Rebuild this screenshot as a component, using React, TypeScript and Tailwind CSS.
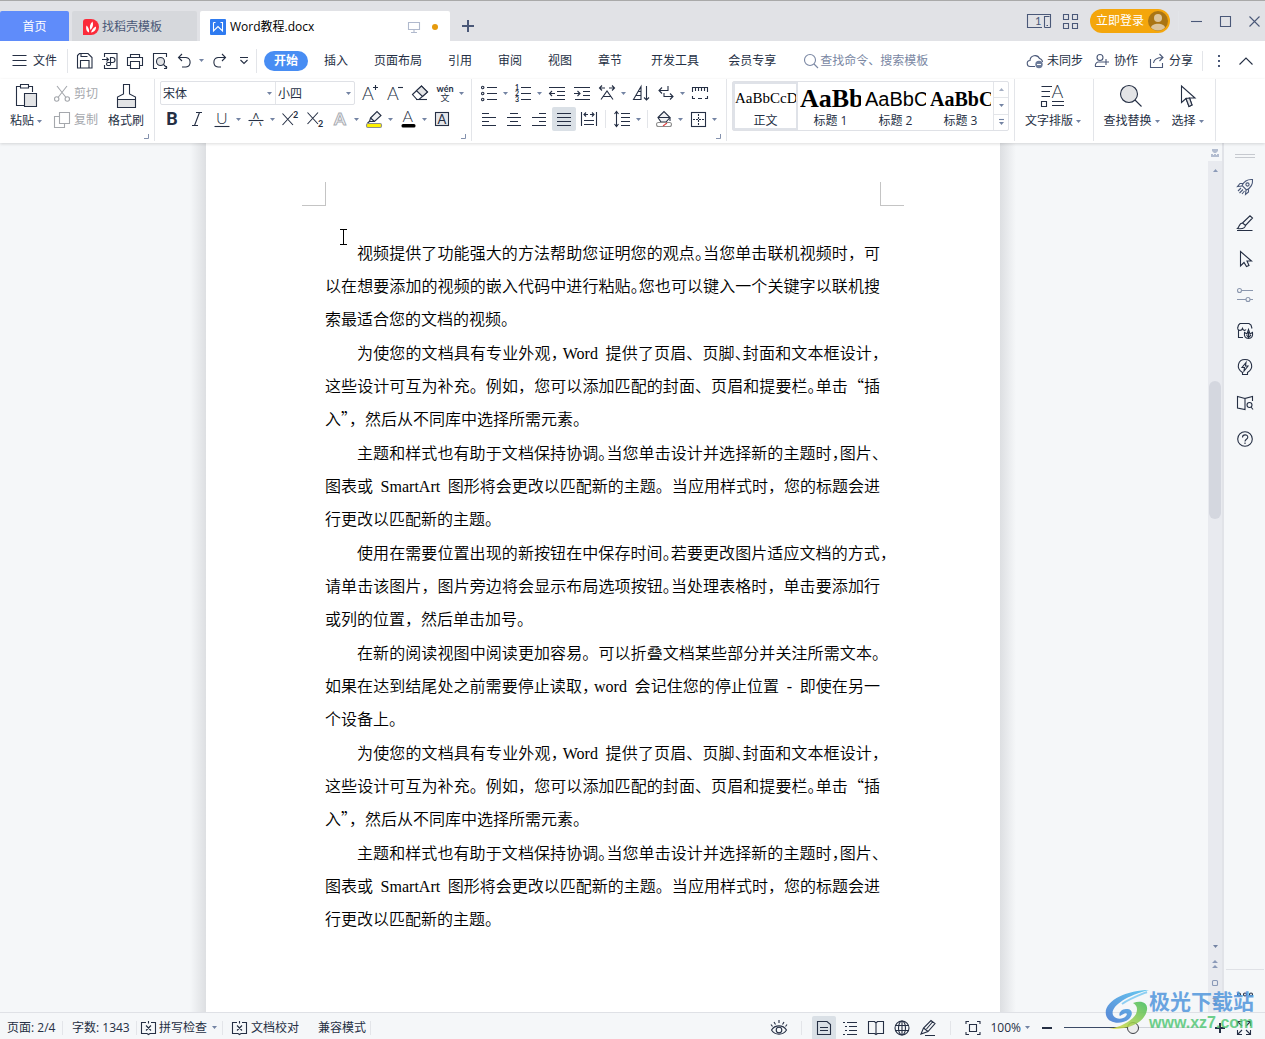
import React from "react";

type Kids = { children?: React.ReactNode };

function Svg({ children, w = 16, h = 16, className = "" }: Kids & { w?: number; h?: number; className?: string }) {
  return (
    <svg width={w} height={h} viewBox={`0 0 ${w} ${h}`} fill="none" stroke="currentColor" strokeWidth="1.1" aria-hidden="true" className={"shrink-0 overflow-visible " + className}>
      {children}
    </svg>
  );
}

function P({ d, fill }: { d: string; fill?: string }) {
  return <path d={d} fill={fill} />;
}

function Letter({ x, y, size, children, weight = 300, color = "currentColor" }: Kids & { x: number; y: number; size: number; weight?: number; color?: string }) {
  return (
    <text x={x} y={y} fontSize={size} fontWeight={weight} fill={color} stroke="none" fontFamily="Lato, 'Noto Sans CJK SC', sans-serif">
      {children}
    </text>
  );
}

function Caret() {
  return (
    <svg width="5" height="3" viewBox="0 0 5 3" className="shrink-0 text-[#7383a3]" aria-hidden="true">
      <path d="M0 0H5L2.5 3Z" fill="currentColor" />
    </svg>
  );
}

function Tool({ label, children, caret, active }: Kids & { label: string; caret?: boolean; active?: boolean }) {
  return (
    <button type="button" aria-label={label} className="flex h-6 shrink-0 items-center">
      <span className={active ? "flex size-6 items-center justify-center rounded-xs bg-[#dae0e6]" : "flex size-6 items-center justify-center"}>{children}</span>
      {caret && (
        <span className="flex w-[9px] justify-center">
          <Caret />
        </span>
      )}
    </button>
  );
}

function Divider({ className = "h-full" }: { className?: string }) {
  return <div className={"w-px shrink-0 bg-[#e3e5e9] " + className} />;
}

function Corner() {
  return (
    <svg width="5" height="5" viewBox="0 0 5 5" className="absolute right-[5px] bottom-0.5 text-[#8391ad]" aria-hidden="true">
      <path d="M4.5 0V4.5H0" fill="none" stroke="currentColor" />
    </svg>
  );
}

function TitleBar() {
  return (
    <header className="flex h-[41px] shrink-0 items-end border-t border-[#a9a9a9] bg-[#e1e2e6]">
      <nav className="flex gap-[3px]">
        <button type="button" className="h-[30px] w-[69px] rounded-t-xs bg-[#5f8cfa] pt-0.5 text-white">首页</button>
        <button type="button" className="flex h-[30px] w-[125px] items-center gap-[3px] rounded-t-xs bg-[#d6d8dc] pt-0.5 pl-[11px] text-[#4a5878]">
          <Svg className="text-white">
            <path d="M3 0H8A8 8 0 0 1 8 16H0V3A3 3 0 0 1 3 0Z" fill="#fb2b3a" stroke="none" />
            <path d="M7.500 11C6.200 8.500 6.800 5 9.500 2.500C10.600 5.500 10 8.500 7.500 11Z" fill="currentColor" stroke="none" />
            <path d="M6 13.500C3.500 12.500 2.500 9.500 3.500 6.500C5.300 8 6.500 10.500 6 13.500ZM8 13.500C8.500 11 10.500 8.500 13 7.500C13.300 10.500 11.500 13.200 8 13.500Z" fill="currentColor" stroke="none" />
          </Svg>
          找稻壳模板
        </button>
        <button type="button" className="flex h-[30px] w-[250px] items-center rounded-t-xs bg-white pt-0.5 pr-3 pl-2.5 text-black">
          <Svg className="text-white">
            <rect width="16" height="16" rx="1" fill="#2f7bf0" stroke="none" />
            <P d="M3.500 3.500V12L8 7.500L12.500 12V3.500H10.500M3.500 3.500H5.500" />
          </Svg>
          <span className="ml-1 flex-1 text-left">Word教程.docx</span>
          <Svg w={12} h={12} className="text-[#b0b9cd]">
            <P d="M0.500 1.500H11.500V8.500H0.500ZM6 8.500V11.500M3 11.500H9" />
          </Svg>
          <span className="ml-3 size-1.5 rounded-full bg-[#e69a0c]" />
        </button>
      </nav>
      <button type="button" aria-label="新建标签" className="ml-3 flex h-[30px] w-3 items-center justify-center text-[#4a5878]">
        <Svg w={12} h={12}>
          <path d="M6 0V12M0 6H12" strokeWidth="2" />
        </Svg>
      </button>
      <div className="ml-auto flex h-full items-center gap-3 pr-[5px] text-[#4a5878]">
        <button type="button" aria-label="单页模式">
          <Svg w={24} h={14}>
            <P d="M15 13.500H0.500V0.500H23.500V13.500M17.500 13.500V2.500H22.500M17.500 13.500H23.500M19.500 11.500H21" />
            <Letter x={8} y={11} size={11} weight={400}>1</Letter>
          </Svg>
        </button>
        <button type="button" aria-label="应用">
          <Svg w={15} h={15}>
            <P d="M0.500 0.500H5.500V5.500H0.500ZM9.500 0.500H14.500V5.500H9.500ZM0.500 9.500H5.500V14.500H0.500ZM9.500 9.500H14.500V14.500H9.500Z" />
          </Svg>
        </button>
        <button type="button" className="flex h-6 w-20 items-center justify-between rounded-full bg-[#f4a60c] pr-0.5 pl-1.5 text-white">
          立即登录
          <Svg w={20} h={20}>
            <circle cx="10" cy="10" r="10" fill="#aa7514" stroke="none" />
            <circle cx="10" cy="7" r="4" fill="#dcc49b" stroke="none" />
            <path d="M3 16.500C4 11.500 16 11.500 17 16.500C14 20.500 6 20.500 3 16.500Z" fill="#dcc49b" stroke="none" />
          </Svg>
        </button>
        <Divider className="-ml-1 h-5 bg-[#c5c8cf]" />
        <div className="flex items-center gap-[18px]">
          <button type="button" aria-label="最小化"><Svg w={11} h={11}><P d="M0 5.500H11" /></Svg></button>
          <button type="button" aria-label="最大化"><Svg w={11} h={11}><P d="M0.500 0.500H10.500V10.500H0.500Z" /></Svg></button>
          <button type="button" aria-label="关闭"><Svg w={11} h={11}><P d="M0.500 0.500L10.500 10.500M10.500 0.500L0.500 10.500" /></Svg></button>
        </div>
      </div>
    </header>
  );
}

function MenuBar() {
  return (
    <div className="flex h-[38px] shrink-0 items-center bg-white pt-px pr-3 whitespace-nowrap">
      <button type="button" className="flex items-center gap-1.5 pl-3">
        <Svg w={15} h={12}><P d="M0.500 0.500H14.500M0.500 5.500H14.500M0.500 10.500H14.500" /></Svg>
        文件
      </button>
      <Divider className="ml-2.5 h-6" />
      <div className="flex items-center gap-px pl-[5px]">
        <Tool label="保存"><Svg><P d="M0.500 2.500L2.500 0.500H11L15 4.500V15H0.500ZM4 0.500V3.500H10.500M3.500 15V7.500H12V15" /></Svg></Tool>
        <Tool label="输出为PDF">
          <Svg>
            <P d="M2.500 4V0.500H15V15.500H2.500V12M0 6.500H6.500M4.500 4.500L6.500 6.500L4.500 8.500" />
            <P d="M8.500 12V4.500H10.500A2.500 2.500 0 0 1 10.500 9.500H6A1.500 1.500 0 0 0 6 12.500H8.500" />
          </Svg>
        </Tool>
        <Tool label="打印"><Svg><P d="M3.500 4V1.500H12.500V4M3 12.500H0.500V4.500H15.500V12.500H13M3.500 8.500H12.500V15.500H3.500Z" /></Svg></Tool>
        <Tool label="打印预览">
          <Svg>
            <P d="M5 15.500H1.500V0.500H14.500V4M14.500 13V15.500H12" />
            <circle cx="8.500" cy="8.500" r="4" fill="#e3e4e6" />
            <P d="M11.500 11.500L15 15" />
          </Svg>
        </Tool>
        <Tool label="撤销" caret><Svg><P d="M5 1L1.500 4.500L5 8M1.500 4.500H9A4.800 4.800 0 0 1 9 14H5" /></Svg></Tool>
        <Tool label="恢复"><Svg><P d="M11 1L14.500 4.500L11 8M14.500 4.500H7A4.800 4.800 0 0 0 7 14H10" /></Svg></Tool>
        <Tool label="自定义快速访问"><Svg w={8} h={8}><P d="M0 0.500H8M0.500 3L4 6.500L7.500 3" /></Svg></Tool>
      </div>
      <Divider className="h-6" />
      <nav className="flex items-center gap-[26px] pl-[7px]">
        <button type="button" className="-mr-2.5 h-5 w-11 rounded-full bg-[#488df3] font-bold text-white">开始</button>
        <button type="button">插入</button>
        <button type="button">页面布局</button>
        <button type="button">引用</button>
        <button type="button">审阅</button>
        <button type="button">视图</button>
        <button type="button">章节</button>
        <button type="button" className="ml-[3px]">开发工具</button>
        <button type="button" className="ml-[3px]">会员专享</button>
      </nav>
      <label className="ml-7 flex items-center gap-0.5 text-[#7a87a3]">
        <Svg w={14} h={14}><circle cx="6" cy="6" r="5.500" /><P d="M10 10L14 14" /></Svg>
        <input aria-label="查找命令、搜索模板" placeholder="查找命令、搜索模板" className="w-32 outline-none placeholder:text-[#7a87a3]" />
      </label>
      <div className="ml-auto flex items-center gap-[11px]">
        <button type="button" className="flex items-center gap-1">
          <Svg className="text-[#4a5878]">
            <P d="M8 13.500H3.500A3 3 0 0 1 3 7.500A5 5 0 0 1 12.500 5.500A4 4 0 0 1 15.500 9" />
            <circle cx="12" cy="11.500" r="3.700" fill="#6b7a99" stroke="none" />
            <path d="M10 11.500H14" stroke="#fff" />
          </Svg>
          未同步
        </button>
        <button type="button" className="flex items-center gap-1">
          <Svg className="text-[#4a5878]">
            <circle cx="6" cy="4.500" r="3" />
            <P d="M9 9H4A3.500 3.500 0 0 0 1.500 13.500H11M12 6V12M9 9H15" />
          </Svg>
          协作
        </button>
        <button type="button" className="flex items-center gap-1">
          <Svg className="text-[#4a5878]"><P d="M1.500 6V14.500H13.500V10M4.500 10C5 6.500 8 4.500 14 4.500M10.500 1L14 4.500L10.500 8" /></Svg>
          分享
        </button>
        <Divider className="-ml-0.5 h-5" />
        <button type="button" aria-label="更多" className="ml-1 flex flex-col gap-[3px]">
          <span className="size-0.5 bg-[#4a5878]" />
          <span className="size-0.5 bg-[#4a5878]" />
          <span className="size-0.5 bg-[#4a5878]" />
        </button>
        <button type="button" aria-label="收起功能区" className="ml-2"><Svg w={14} h={8}><P d="M0.500 7.500L7 1L13.500 7.500" /></Svg></button>
      </div>
    </div>
  );
}

function Labelled({ icon, text, caret }: { icon: React.ReactNode; text: string; caret?: boolean }) {
  return (
    <button type="button" className="flex flex-col items-center gap-[3px] pt-1">
      <span className="flex h-[26px] items-center justify-center">{icon}</span>
      <span className="flex items-center gap-[3px] leading-[18px]">
        {text}
        {caret && <Caret />}
      </span>
    </button>
  );
}

function StyleCard({ sample, name, font, active }: { sample: string; name: string; font: string; active?: boolean }) {
  return (
    <button type="button" className={(active ? "border-[#dfe2e8] " : "border-transparent ") + "flex h-full w-[65px] flex-col items-center justify-between overflow-hidden border-2"}>
      <span className={"flex h-[30px] w-full items-center overflow-hidden whitespace-nowrap text-black " + font}>{sample}</span>
      <span className="leading-[14px]">{name}</span>
    </button>
  );
}

function Ribbon() {
  return (
    <div className="z-10 flex h-16 shrink-0 items-start bg-white whitespace-nowrap shadow-[0_1px_3px_rgba(0,0,0,0.14)]">
      <section className="relative flex h-[62px] w-[154px] items-start pl-2.5">
        <Labelled
          text="粘贴"
          caret
          icon={
            <Svg w={21} h={24}>
              <P d="M4 2.500H0.500V21.500H8M12 2.500H16.500V8M4.500 0.500H12.500V4H4.500Z" />
              <P d="M8.500 9.500H20.500V22.500H8.500Z" fill="#e3e4e6" />
            </Svg>
          }
        />
        <div className="ml-3 flex flex-col gap-0.5 pt-[3px] text-[#a5a8ad]">
          <button type="button" className="flex h-6 items-center gap-1">
            <Svg><P d="M3 0L12 11.500M13 0L4 11.500" /><circle cx="2.700" cy="13" r="2.200" /><circle cx="13.300" cy="13" r="2.200" /></Svg>
            剪切
          </button>
          <button type="button" className="flex h-6 items-center gap-1">
            <Svg><P d="M5.500 0.500H15.500V11.500H5.500ZM5.500 4.500H0.500V15.500H10.500V11.500" /></Svg>
            复制
          </button>
        </div>
        <div className="ml-2.5">
          <Labelled
            text="格式刷"
            icon={
              <Svg w={19} h={24}>
                <P d="M0.500 15.500H18.500V23.500H0.500Z" fill="#e3e4e6" />
                <P d="M0.500 15.500V13L6.500 10V0.500H12.500V10L18.500 13V15.500" />
              </Svg>
            }
          />
        </div>
        <Corner />
      </section>
      <Divider className="h-[62px]" />
      <section className="relative flex h-[62px] w-[316px] flex-col gap-0.5 pt-0.5 pl-[5px]">
        <div className="flex gap-[3px]">
          <div className="flex h-6 rounded-xs border border-[#dfe1e6]">
            <label className="relative flex items-center">
              <select aria-label="字体" className="h-full w-[114px] appearance-none pt-px pl-0.5 outline-none"><option>宋体</option></select>
              <span className="absolute right-[3px]"><Caret /></span>
            </label>
            <Divider />
            <label className="relative flex items-center">
              <select aria-label="字号" className="h-full w-[78px] appearance-none pt-px pl-0.5 outline-none"><option>小四</option></select>
              <span className="absolute right-[3px]"><Caret /></span>
            </label>
          </div>
          <div className="flex gap-px">
            <Tool label="增大字号"><Svg><Letter x={0} y={15} size={18}>A</Letter><P d="M11 2.500H16M13.500 0V5" /></Svg></Tool>
            <Tool label="减小字号"><Svg><Letter x={0} y={15} size={18}>A</Letter><P d="M11 2.500H16" /></Svg></Tool>
            <Tool label="清除格式">
              <Svg>
                <P d="M0.500 9.500L9.500 1L15.500 7L7 14.500H5Z" />
                <P d="M4.500 5.700L9.500 1L15.500 7L10.500 11.500Z" fill="#e3e4e6" />
                <P d="M4 14.500H15" />
              </Svg>
            </Tool>
            <Tool label="拼音指南" caret>
              <span className="flex flex-col items-center">
                <span className="font-[Lato] text-[9px] leading-[9px] font-bold">wén</span>
                <span className="text-[9px] leading-[9px]">文</span>
              </span>
            </Tool>
          </div>
        </div>
        <div className="flex gap-px">
          <Tool label="加粗"><span className="font-[Roboto] text-lg font-bold">B</span></Tool>
          <Tool label="倾斜"><Svg><P d="M7 1.500H13M3 14.500H9M10.500 1.500L5.500 14.500" /></Svg></Tool>
          <Tool label="下划线" caret><Svg><Letter x={2} y={13} size={16}>U</Letter><P d="M0.500 15.500H15.500" /></Svg></Tool>
          <Tool label="删除线" caret><Svg><Letter x={2} y={15} size={18}>A</Letter><path d="M0 9.500H16" stroke="#fff" strokeWidth="3" /><P d="M0.500 9.500H15.500" /></Svg></Tool>
          <Tool label="上标"><Svg><P d="M0.500 2.500L11 14M11 2.500L0.500 14" /><Letter x={11} y={7} size={9} weight={700}>2</Letter></Svg></Tool>
          <Tool label="下标"><Svg><P d="M0.500 1.500L11 13M11 1.500L0.500 13" /><Letter x={11} y={16} size={9} weight={700}>2</Letter></Svg></Tool>
          <Tool label="文字效果" caret>
            <svg width="16" height="18" viewBox="0 0 16 18" aria-hidden="true" className="overflow-visible">
              <text x="2" y="15" fontSize="17" fontWeight="700" fontFamily="Lato, sans-serif" fill="#fff" stroke="#a9acb3" strokeWidth="1">A</text>
            </svg>
          </Tool>
          <Tool label="突出显示" caret>
            <Svg>
              <P d="M4.500 7L11 0.500L15 4.500L8.500 10.500H3.500Z" fill="#f1f2f4" />
              <P d="M4.500 7L8.500 10.500M3.500 10.500L1.500 12" />
              <rect x="0.500" y="12.500" width="15" height="4" rx="1.500" fill="#fff200" stroke="#8e8e8e" />
            </Svg>
          </Tool>
          <Tool label="字体颜色" caret><Svg><Letter x={2.500} y={11} size={16}>A</Letter><rect x="1.500" y="13" width="14" height="3.500" rx="1.500" fill="#000" stroke="none" /></Svg></Tool>
          <Tool label="字符底纹"><Svg><rect x="1.500" y="1.500" width="13" height="13" fill="#e6e7ea" /><Letter x={3.500} y={13} size={13} weight={400}>A</Letter></Svg></Tool>
        </div>
        <Corner />
      </section>
      <Divider className="h-[62px]" />
      <section className="relative flex h-[62px] w-[254px] flex-col gap-0.5 pt-0.5 pl-[5px]">
        <div className="flex gap-px">
          <Tool label="项目符号" caret>
            <Svg><circle cx="1.700" cy="2.500" r="1.200" /><circle cx="1.700" cy="8.500" r="1.200" /><circle cx="1.700" cy="14.500" r="1.200" /><P d="M6 2.500H16M6 8.500H16M6 14.500H16" /></Svg>
          </Tool>
          <Tool label="编号" caret>
            <Svg>
              <Letter x={0} y={5} size={7} weight={700}>1</Letter><Letter x={0} y={11} size={7} weight={700}>2</Letter><Letter x={0} y={17} size={7} weight={700}>3</Letter>
              <P d="M6 2.500H16M6 8.500H16M6 14.500H16" />
            </Svg>
          </Tool>
          <Tool label="减少缩进"><Svg><P d="M0 2.500H16M8 6.500H16M8 10.500H16M1 14.500H16M0.500 8.500H6M3 6L0.500 8.500L3 11" /></Svg></Tool>
          <Tool label="增加缩进"><Svg><P d="M0 2.500H16M9 6.500H16M9 10.500H16M1 14.500H16M0 8.500H6M3.500 6L6 8.500L3.500 11" /></Svg></Tool>
          <Tool label="中文版式" caret><Svg><P d="M3 0.500L0.500 3L3 5.500M0.500 3H6M13 0.500L15.500 3L13 5.500M15.500 3H10M2 14.500L8 6L14 14.500M4.500 11.500H11.500" /></Svg></Tool>
          <Tool label="排序"><Svg><P d="M0.500 14.500L8 1.500V14.500ZM3 10.500H8M5 6.500H8M13.500 1V15M11 12.500L13.500 15L16 12.500" /></Svg></Tool>
          <Tool label="显示编辑标记" caret><Svg><P d="M1 5.500H10V1M4 2.500L1 5.500L4 8.500M6 8V11.500H15M12 8.500L15 11.500L12 14.500" /></Svg></Tool>
          <Tool label="制表位"><Svg><P d="M0.500 7V2.500H15.500V7M3.500 2.500V6M6.500 2.500V6M9.500 2.500V6M12.500 2.500V6M0.500 11V13.500H3M6 13.500H10M13 13.500H15.500V11" /></Svg></Tool>
        </div>
        <div className="flex items-center gap-px">
          <Tool label="左对齐"><Svg><P d="M1 2.500H8M1 6.500H15M1 10.500H8M1 14.500H15" /></Svg></Tool>
          <Tool label="居中"><Svg><P d="M4 2.500H12M1 6.500H15M4 10.500H12M1 14.500H15" /></Svg></Tool>
          <Tool label="右对齐"><Svg><P d="M8 2.500H15M1 6.500H15M8 10.500H15M1 14.500H15" /></Svg></Tool>
          <Tool label="两端对齐" active><Svg><P d="M1 2.500H15M1 6.500H15M1 10.500H15M1 14.500H15" /></Svg></Tool>
          <Tool label="分散对齐"><Svg><P d="M0.500 1V15M15.500 1V15M3 3.500H7M9 3.500H13M5 1.500L3 3.500L5 5.500M11 1.500L13 3.500L11 5.500M3 9.500H13M3 13.500H13" /></Svg></Tool>
          <Divider className="mx-[3px] h-[18px]" />
          <Tool label="行距" caret><Svg><P d="M2.500 0.500V15.500M0.500 3L2.500 0.500L4.500 3M0.500 13L2.500 15.500L4.500 13M7 2.500H16M7 6.500H16M7 10.500H16M7 14.500H16" /></Svg></Tool>
          <Divider className="mx-[3px] h-[18px]" />
          <Tool label="底纹颜色" caret>
            <Svg>
              <P d="M2 6.500L8 0.500L14 6.500L10 11H5Z" fill="#f1f2f4" />
              <P d="M2 6.500H13M14 6.500V10" />
              <rect x="0.500" y="11.500" width="15" height="4" rx="2" stroke="#8e8e8e" />
              <path d="M7 15L11 12" stroke="#e04343" />
            </Svg>
          </Tool>
          <Tool label="边框" caret><Svg><rect x="1.500" y="1.500" width="14" height="14" /><path d="M8.500 3V14M3 8.500H14" strokeDasharray="2 1" /></Svg></Tool>
        </div>
        <Corner />
      </section>
      <Divider className="h-[62px]" />
      <section className="flex h-[62px] px-[5px] pt-0.5">
        <div className="flex h-[50px] rounded-xs border border-[#dfe1e6]">
          <StyleCard active sample="AaBbCcDd" name="正文" font="font-['Liberation_Serif'] text-[15px]" />
          <StyleCard sample="AaBb" name="标题 1" font="font-['Liberation_Serif'] text-[26px] font-bold" />
          <StyleCard sample="AaBbC" name="标题 2" font="font-['Liberation_Sans'] text-xl" />
          <StyleCard sample="AaBbC" name="标题 3" font="font-['Liberation_Serif'] text-xl font-bold" />
          <div className="flex w-[15px] flex-col divide-y divide-[#e3e5e9] border-l border-[#e3e5e9] text-[#7383a3]">
            <button type="button" aria-label="上一行" className="flex flex-1 items-center justify-center"><Svg w={5} h={3}><path d="M0 3H5L2.500 0Z" fill="#a4aec3" stroke="none" /></Svg></button>
            <button type="button" aria-label="下一行" className="flex flex-1 items-center justify-center"><Caret /></button>
            <button type="button" aria-label="更多样式" className="flex flex-1 items-center justify-center"><Svg w={5} h={6}><P d="M0 0.500H5" /><path d="M0 3H5L2.500 6Z" fill="currentColor" stroke="none" /></Svg></button>
          </div>
        </div>
      </section>
      <Divider className="h-[62px]" />
      <section className="flex h-[62px] w-[76px] justify-center">
        <Labelled
          text="文字排版"
          caret
          icon={
            <Svg w={24} h={22}>
              <P d="M0.500 1.500H11M0.500 6.500H9M0.500 11.500H9M11 20.500H23M11 16.500H23M0.500 16.500H5.500V21.500H0.500Z" />
              <Letter x={10.500} y={13} size={18}>A</Letter>
            </Svg>
          }
        />
      </section>
      <Divider className="ml-0.5 h-[62px]" />
      <section className="flex h-[62px] w-[119px] items-start justify-center gap-3">
        <Labelled text="查找替换" caret icon={<Svg w={22} h={22}><circle cx="9" cy="9" r="8.500" fill="#e3e4e6" /><P d="M15 15L21.500 21.500" /></Svg>} />
        <Labelled text="选择" caret icon={<Svg w={16} h={22}><P d="M1.500 1V17.500L6 13.500L9 21.500L12 20L9.500 13H15Z" /><path d="M6 13.500L9 21.500L12 20L9.500 13Z" fill="#e3e4e6" /></Svg>} />
      </section>
      <Divider className="ml-0.5 h-[62px]" />
    </div>
  );
}

/* A "~" after a punctuation mark sets that mark half-width. */
function Line({ text, last, hang }: { text: string; last?: boolean; hang?: boolean }) {
  const parts = text.split(/([。，、”]~|[A-Za-z]+|-)/);
  return (
    <span className={"block h-[33px] whitespace-nowrap " + (last ? "" : "[text-align-last:justify] ") + (hang ? "-mr-2" : "")}>
      {parts.map((part, i) =>
        part.endsWith("~") ? (
          <span key={i} className="[font-feature-settings:'halt']">{part[0]}</span>
        ) : /^[A-Za-z-]+$/.test(part) ? (
          <span key={i} className="px-1 font-['Liberation_Serif']">{part}</span>
        ) : (
          part
        ),
      )}
    </span>
  );
}

const appearance = [
  "为使您的文档具有专业外观，~Word 提供了页眉、页脚、~封面和文本框设计，~",
  "这些设计可互为补充。例如，您可以添加匹配的封面、页眉和提要栏。~单击“插",
  "入”~，然后从不同库中选择所需元素。",
];
const themes = [
  "主题和样式也有助于文档保持协调。~当您单击设计并选择新的主题时，~图片、~",
  "图表或 SmartArt 图形将会更改以匹配新的主题。当应用样式时，您的标题会进",
  "行更改以匹配新的主题。",
];
const paragraphs = [
  [
    "视频提供了功能强大的方法帮助您证明您的观点。~当您单击联机视频时，可",
    "以在想要添加的视频的嵌入代码中进行粘贴。~您也可以键入一个关键字以联机搜",
    "索最适合您的文档的视频。",
  ],
  appearance,
  themes,
  [
    "使用在需要位置出现的新按钮在中保存时间。~若要更改图片适应文档的方式，~",
    "请单击该图片，图片旁边将会显示布局选项按钮。~当处理表格时，单击要添加行",
    "或列的位置，然后单击加号。",
  ],
  [
    "在新的阅读视图中阅读更加容易。可以折叠文档某些部分并关注所需文本。~",
    "如果在达到结尾处之前需要停止读取，~word 会记住您的停止位置 - 即使在另一",
    "个设备上。",
  ],
  appearance,
  themes,
];

function Page() {
  return (
    <div className="flex min-w-0 flex-1 justify-center overflow-hidden bg-[#f5f7f9] pr-0.5">
      <div className="w-4 bg-linear-to-l from-[#dddfe2] to-[#f5f7f9]" />
      <article className="relative w-[794px] shrink-0 bg-white pt-[39px] pr-[120px] pl-[119px] text-base text-black">
        <div className="-mr-6 -ml-[23px] flex justify-between">
          <div className="size-6 border-r border-b border-[#c4c4c4]" />
          <div className="size-6 border-b border-l border-[#c4c4c4]" />
        </div>
        <svg width="9" height="16" viewBox="0 0 9 16" className="absolute top-[86px] left-[133px]" aria-hidden="true">
          <path d="M1 0.500H8M1 15.500H8M4.500 0.500V15.500" stroke="#000" fill="none" />
        </svg>
        <div className="flex flex-col gap-px pt-[30px] leading-[33px] font-[350] [text-spacing-trim:space-all]">
          {paragraphs.map((lines, i) => (
            <p key={i} className="indent-8">
              {lines.map((text, j) => (
                <span key={j} className={j === 0 ? "block" : "block indent-0"}>
                  <Line text={text} last={j === lines.length - 1} hang={i === 3 && j === 0} />
                </span>
              ))}
            </p>
          ))}
        </div>
      </article>
      <div className="w-4 bg-linear-to-r from-[#dddfe2] to-[#f5f7f9]" />
    </div>
  );
}

function Scrollbar() {
  return (
    <div className="flex w-3.5 shrink-0 flex-col items-center bg-[#e8eaef] text-[#8b9ab8]">
      <div className="flex h-[18px] w-full items-center justify-center bg-[#f5f7f9] pt-0.5 text-[#b3bdd0]">
        <Svg w={8} h={8}><path d="M1 0H7V2L5 4H3L1 2ZM0 5H2V6H3V5H5V6H6V5H8V8H0Z" fill="currentColor" stroke="none" /></Svg>
      </div>
      <button type="button" aria-label="向上滚动" className="flex h-[18px] items-center"><Svg w={5} h={3}><path d="M0 3H5L2.500 0Z" fill="currentColor" stroke="none" /></Svg></button>
      <div className="flex w-full flex-1 flex-col items-center">
        <div className="grow-[201]" />
        <div className="w-3 grow-[137] rounded-full bg-[#d4d7df]" />
        <div className="grow-[423]" />
      </div>
      <div className="flex flex-col items-center gap-3 pb-1.5">
        <button type="button" aria-label="向下滚动"><Caret /></button>
        <button type="button" aria-label="上一页"><Svg w={6} h={8}><path d="M0 3H6L3 0ZM0 8H6L3 5Z" fill="currentColor" stroke="none" /></Svg></button>
        <button type="button" aria-label="选择浏览对象"><Svg w={6} h={6}><rect x="0.500" y="0.500" width="5" height="5" rx="1" /></Svg></button>
        <button type="button" aria-label="下一页"><Svg w={6} h={8}><path d="M0 0H6L3 3ZM0 5H6L3 8Z" fill="currentColor" stroke="none" /></Svg></button>
      </div>
    </div>
  );
}

function SideBar() {
  return (
    <aside className="flex w-[43px] shrink-0 flex-col items-center border-l-2 border-[#e1e3e8] bg-[#f5f7f9] pt-[11px]">
      <div className="h-1 w-5 border-y border-[#c6c9cf]" />
      <div className="mt-[17px] flex flex-col gap-3">
        <Tool label="推荐">
          <Svg className="text-[#4a5878]">
            <P d="M15.500 0.500C10 0 7 2.500 5 6.500L9.500 11C13.500 9 16 6 15.500 0.500ZM6.500 4.500H3L0.500 7.500L5 7M11.500 9.500V13L8.500 15.500L9 11M4 9L1 12M6 10.500L2.500 14M7.500 12L5 15" />
            <circle cx="10.500" cy="5.500" r="1.600" />
          </Svg>
        </Tool>
        <Tool label="样式和格式"><Svg><P d="M5.500 8L13 0.800L15.500 3L8.500 10.500ZM5.500 8C2 8 2.500 12 0.500 13.500C4 14 8 13.500 8.500 10.500M0 15.500H15.500" /></Svg></Tool>
        <Tool label="选择窗格"><Svg><P d="M3.500 0.500V15L7 11.500L9.500 15.500L12 14.500L10 10H14.500Z" /></Svg></Tool>
        <Tool label="属性"><Svg className="text-[#8b97ae]"><circle cx="2.500" cy="3.500" r="2" /><P d="M4.500 3.500H16M0 12.500H9M13 12.500H16" /><circle cx="11" cy="12.500" r="2" /></Svg></Tool>
        <Tool label="稻壳资源">
          <Svg>
            <P d="M1.500 6.500V14.500H6M0.500 5.500L1.500 2L3 0.500H12L14 2L15 5.500M0.500 5.500C1.500 8 4.500 8 5.500 5.500C6 7.500 8 8 9 6.500" />
            <P d="M11.500 15.500C8 15.500 7 13 7.500 9.500L10 11L11.500 6.500L13 11L15.500 9.500C16 13 15 15.500 11.500 15.500ZM11.500 9V15.500M9.500 12L11.500 14.500L14 12" />
          </Svg>
        </Tool>
        <Tool label="智能助手"><Svg><P d="M5.500 15.500V13.500C-1.500 9 1 0.500 8 0.500C15 0.500 17.500 9 10.500 13.500V15.500ZM9 3.500L5 8.500H7.500L7 12L11 7H8.500Z" /></Svg></Tool>
        <Tool label="查阅"><Svg><P d="M8 3.500L0.500 1.500V13L8 14.500V3.500L15.500 1.500V6" /><circle cx="12.500" cy="10" r="2.500" /><P d="M14 12L16 14.500" /></Svg></Tool>
        <Tool label="帮助"><Svg><circle cx="8" cy="8" r="7.300" /><P d="M5.500 6.500C5.500 3 10.800 3 10.800 6.300C10.800 8.300 8 8.300 8 10.500M8 11.500V13" /></Svg></Tool>
      </div>
      <div className="mt-auto flex h-[43px] w-[38px] justify-center border-t border-[#dfe1e6] pt-[22px]">
        <Svg w={16} h={5}><circle cx="2" cy="2.500" r="1.500" /><circle cx="8" cy="2.500" r="1.500" /><circle cx="14" cy="2.500" r="1.500" /></Svg>
      </div>
    </aside>
  );
}

function ProofIcon() {
  return <Svg w={15} h={14}><P d="M5 1.500H0.500V12.500H6L7.500 13.500L9 12.500H14.500V1.500H10M7.500 0V2.500M5 4.500L10 9.500M10 4.500L5 9.500" /></Svg>;
}

function StatusBar() {
  return (
    <footer className="flex h-[27px] shrink-0 items-center border-t border-[#dfe1e6] bg-[#f5f7f9] pt-[3px] pr-3.5 pl-[7px] whitespace-nowrap">
      <span className="w-[55px]">页面: 2/4</span>
      <Divider className="h-3.5" />
      <span className="w-[73px] pl-[9px]">字数: 1343</span>
      <Divider className="h-3.5" />
      <button type="button" className="flex items-center gap-[3px] px-1">
        <ProofIcon />
        拼写检查
        <span className="ml-0.5"><Caret /></span>
      </button>
      <Divider className="ml-px h-3.5" />
      <button type="button" className="ml-[9px] flex items-center gap-1"><ProofIcon />文档校对</button>
      <button type="button" className="mr-1 ml-[19px]">兼容模式</button>
      <Divider className="h-3.5" />
      <div className="ml-auto flex items-center gap-0.5">
        <Tool label="护眼模式"><Svg><P d="M0.500 10C4 4.500 12 4.500 15.500 10C12 15.500 4 15.500 0.500 10ZM8 0V3M3 2L4.500 4.500M13 2L11.500 4.500M0 4.500L1.500 6.500M16 4.500L14.500 6.500" /><circle cx="8" cy="10" r="2.800" /></Svg></Tool>
        <Divider className="mx-2 h-3.5" />
        <Tool label="页面视图" active><Svg><P d="M1.500 1.500H11L14.500 4.500V14.500H1.500ZM4 7.500H12M4 10.500H12" /></Svg></Tool>
        <Tool label="大纲"><Svg><P d="M1 2.500H3M5 2.500H15M3 6.500H5M7 6.500H15M3 10.500H5M7 10.500H15M1 14.500H3M5 14.500H15" /></Svg></Tool>
        <Tool label="阅读版式"><Svg><P d="M8 3V14.500M8 3L6.500 1.500H0.500V13.500H6.500L8 14.500L9.500 13.500H15.500V1.500H9.500Z" /></Svg></Tool>
        <Tool label="Web版式"><Svg><circle cx="8" cy="8" r="7" /><ellipse cx="8" cy="8" rx="3.500" ry="7" /><P d="M8 1V15M1 5.500H15M1 10.500H15" /></Svg></Tool>
        <Tool label="写作模式"><Svg><P d="M1 14L3.500 8L11 0.500L15 3.500L8 11.500ZM3.500 8L8 11.500M6.500 9L12.500 2M5 15.500H15" /></Svg></Tool>
        <Divider className="mx-2 h-3.5" />
        <Tool label="最佳显示比例"><Svg><P d="M1 4V1.500H4M12 1.500H15V4M15 12V14.500H12M4 14.500H1V12M4.500 4.500H11.500V11.500H4.500Z" /></Svg></Tool>
        <button type="button" className="ml-[3px] flex items-center gap-1">100%<Caret /></button>
        <button type="button" aria-label="缩小" className="ml-2.5"><Svg w={10} h={10}><path d="M0 5H10" strokeWidth="2" /></Svg></button>
        <input
          type="range"
          aria-label="显示比例"
          defaultValue={49}
          className="mr-1 ml-2.5 h-3 w-[141px] appearance-none bg-[linear-gradient(to_right,#3b4a66_49%,#cfd2d8_49%)] bg-size-[100%_1px] bg-center bg-no-repeat [&::-webkit-slider-thumb]:size-3 [&::-webkit-slider-thumb]:appearance-none [&::-webkit-slider-thumb]:rounded-full [&::-webkit-slider-thumb]:border [&::-webkit-slider-thumb]:border-[#3c3f45] [&::-webkit-slider-thumb]:bg-[#ececec]"
        />
        <button type="button" aria-label="放大" className="ml-1"><Svg w={10} h={10}><path d="M0 5H10M5 0V10" strokeWidth="2" /></Svg></button>
        <button type="button" aria-label="全屏显示" className="ml-2.5"><Svg w={14} h={14}><P d="M0.500 5V0.500H5M0.500 0.500L5 5M9 0.500H13.500V5M13.500 0.500L9 5M13.500 9V13.500H9M13.500 13.500L9 9M5 13.500H0.500V9M0.500 13.500L5 9" /></Svg></button>
      </div>
    </footer>
  );
}

function Watermark() {
  return (
    <div className="pointer-events-none absolute right-[11px] bottom-1.5 z-20 flex items-center opacity-85">
      <svg width="44" height="44" viewBox="0 0 44 44" aria-hidden="true">
        <defs>
          <linearGradient id="swirlBlue" x1="1" y1="0" x2="0" y2="1">
            <stop offset="0" stopColor="#4fc3f0" />
            <stop offset="1" stopColor="#3d73d0" />
          </linearGradient>
          <linearGradient id="swirlGreen" x1="1" y1="0" x2="0" y2="1">
            <stop offset="0" stopColor="#3dbb5c" />
            <stop offset="1" stopColor="#e6e043" />
          </linearGradient>
        </defs>
        <path d="M44 1C22 1 -2 12 1 26C3 35 17 36 24 30C29 25 27 19 21 20C16 20 13 25 15 27C18 25 21 23 22 25C21 30 11 32 8 26C5 18 20 7 44 1Z" fill="url(#swirlBlue)" />
        <path d="M42 3C32 7 24 10 17 15" fill="none" stroke="#7cc9f2" strokeWidth="2" />
        <path d="M28 14C37 11 43 14 42 21C40 32 27 41 4 40C16 38 27 32 31 25C33 20 32 16 28 14Z" fill="url(#swirlGreen)" />
      </svg>
      <div className="flex flex-col">
        <span className="text-[21px] leading-6 font-bold text-[#5196dc]">极光下载站</span>
        <span className="font-['Liberation_Sans'] text-base leading-5 font-bold text-[#55c878]">www.xz7.com</span>
      </div>
    </div>
  );
}

export default function App() {
  return (
    <div className="relative flex h-screen flex-col overflow-hidden bg-[#f5f7f9] font-['Open_Sans','Noto_Sans_CJK_SC',sans-serif] text-xs text-[#252f44]">
      <TitleBar />
      <MenuBar />
      <Ribbon />
      <main className="flex min-h-0 flex-1 font-['Noto_Sans_CJK_SC',sans-serif]">
        <Page />
        <Scrollbar />
        <SideBar />
      </main>
      <StatusBar />
      <Watermark />
    </div>
  );
}
